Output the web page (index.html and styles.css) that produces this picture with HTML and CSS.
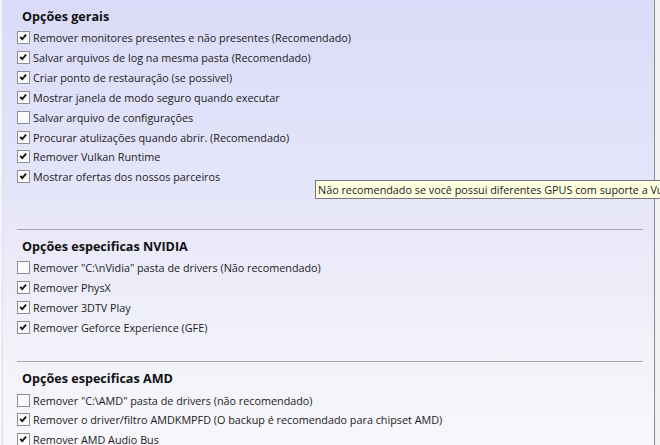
FILE: index.html
```html
<!DOCTYPE html>
<html lang="pt">
<head>
<meta charset="utf-8">
<title>Opções</title>
<link rel="stylesheet" href="styles.css">
</head>
<body>
<div class="window">
  <div class="edge-left"></div>
  <div class="panel">
    <section class="group group-general">
      <h2 class="group-title">Opções gerais</h2>
      <ul class="opts">
        <li class="opt"><span class="cb on"><svg viewBox="0 0 13 13"><polyline points="2.6,5.8 5,8.4 9.6,3.2"/></svg></span>Remover monitores presentes e não presentes (Recomendado)</li>
        <li class="opt"><span class="cb on"><svg viewBox="0 0 13 13"><polyline points="2.6,5.8 5,8.4 9.6,3.2"/></svg></span>Salvar arquivos de log na mesma pasta (Recomendado)</li>
        <li class="opt"><span class="cb on"><svg viewBox="0 0 13 13"><polyline points="2.6,5.8 5,8.4 9.6,3.2"/></svg></span>Criar ponto de restauração (se possivel)</li>
        <li class="opt"><span class="cb on"><svg viewBox="0 0 13 13"><polyline points="2.6,5.8 5,8.4 9.6,3.2"/></svg></span>Mostrar janela de modo seguro quando executar</li>
        <li class="opt"><span class="cb"></span>Salvar arquivo de configurações</li>
        <li class="opt"><span class="cb on"><svg viewBox="0 0 13 13"><polyline points="2.6,5.8 5,8.4 9.6,3.2"/></svg></span>Procurar atulizações quando abrir. (Recomendado)</li>
        <li class="opt"><span class="cb on"><svg viewBox="0 0 13 13"><polyline points="2.6,5.8 5,8.4 9.6,3.2"/></svg></span>Remover Vulkan Runtime</li>
        <li class="opt"><span class="cb on"><svg viewBox="0 0 13 13"><polyline points="2.6,5.8 5,8.4 9.6,3.2"/></svg></span>Mostrar ofertas dos nossos parceiros</li>
      </ul>
    </section>
    <hr class="sep sep-1">
    <section class="group">
      <h2 class="group-title">Opções especificas NVIDIA</h2>
      <ul class="opts">
        <li class="opt"><span class="cb"></span>Remover "C:\nVidia" pasta de drivers (Não recomendado)</li>
        <li class="opt"><span class="cb on"><svg viewBox="0 0 13 13"><polyline points="2.6,5.8 5,8.4 9.6,3.2"/></svg></span>Remover PhysX</li>
        <li class="opt"><span class="cb on"><svg viewBox="0 0 13 13"><polyline points="2.6,5.8 5,8.4 9.6,3.2"/></svg></span>Remover 3DTV Play</li>
        <li class="opt"><span class="cb on"><svg viewBox="0 0 13 13"><polyline points="2.6,5.8 5,8.4 9.6,3.2"/></svg></span>Remover Geforce Experience (GFE)</li>
      </ul>
    </section>
    <hr class="sep sep-2">
    <section class="group">
      <h2 class="group-title">Opções especificas AMD</h2>
      <ul class="opts">
        <li class="opt"><span class="cb"></span>Remover "C:\AMD" pasta de drivers (não recomendado)</li>
        <li class="opt"><span class="cb on"><svg viewBox="0 0 13 13"><polyline points="2.6,5.8 5,8.4 9.6,3.2"/></svg></span>Remover o driver/filtro AMDKMPFD (O backup é recomendado para chipset AMD)</li>
        <li class="opt"><span class="cb on"><svg viewBox="0 0 13 13"><polyline points="2.6,5.8 5,8.4 9.6,3.2"/></svg></span>Remover AMD Audio Bus</li>
      </ul>
    </section>
  </div>
  <div class="edge-right"></div>
  <div class="tooltip">Não recomendado se você possui diferentes GPUS com suporte a Vulkan</div>
</div>
</body>
</html>
```
FILE: styles.css
```css
html, body {
  margin: 0;
  padding: 0;
}
body {
  width: 660px;
  height: 445px;
  overflow: hidden;
  font-family: "Open Sans", "Noto Sans", sans-serif;
  color: #1b1b1b;
}
.window {
  position: relative;
  display: flex;
  width: 660px;
  height: 445px;
  overflow: hidden;
}
.edge-left {
  width: 2px;
  background: #f6f6fa;
  border-right: 1px solid #dedeea;
}
.panel {
  flex: 1;
  padding: 8px 11px 0 14px;
  background: linear-gradient(to bottom, #dbdbf9 0%, #e4e4f9 40%, #f1f1fa 75%, #f7f7fb 100%);
}
.edge-right {
  width: 5px;
  border-left: 1px solid #8a8a90;
  background: #f2f2f4;
}
.group-title {
  margin: 0 0 2px 5px;
  height: 18px;
  font-size: 12.6px;
  line-height: 18px;
  font-weight: 700;
  color: #111;
}
.opts {
  list-style: none;
  margin: 0;
  padding: 0;
}
.opt {
  display: flex;
  align-items: center;
  height: 19.85px;
  font-size: 10.8px;
  white-space: nowrap;
}
.cb {
  box-sizing: border-box;
  width: 13px;
  height: 13px;
  margin-right: 3px;
  border: 1px solid #8d8f94;
  background: #fbfbfb;
  flex: none;
  display: flex;
}
.cb svg {
  width: 11px;
  height: 11px;
  fill: none;
  stroke: #111;
  stroke-width: 2.2;
}
.sep {
  margin: 0;
  border: 0;
  height: 1px;
  background: #a6a6ae;
}
.sep-1 {
  margin-top: 42px;
  margin-bottom: 8px;
}
.sep-2 {
  margin-top: 24px;
  margin-bottom: 8px;
}
.tooltip {
  position: absolute;
  left: 315px;
  top: 180px;
  height: 17px;
  padding: 0 4px 0 2px;
  border: 1px solid #767676;
  background: #ffffe1;
  font-size: 10.8px;
  line-height: 17px;
  white-space: nowrap;
  color: #1b1b1b;
}
```
